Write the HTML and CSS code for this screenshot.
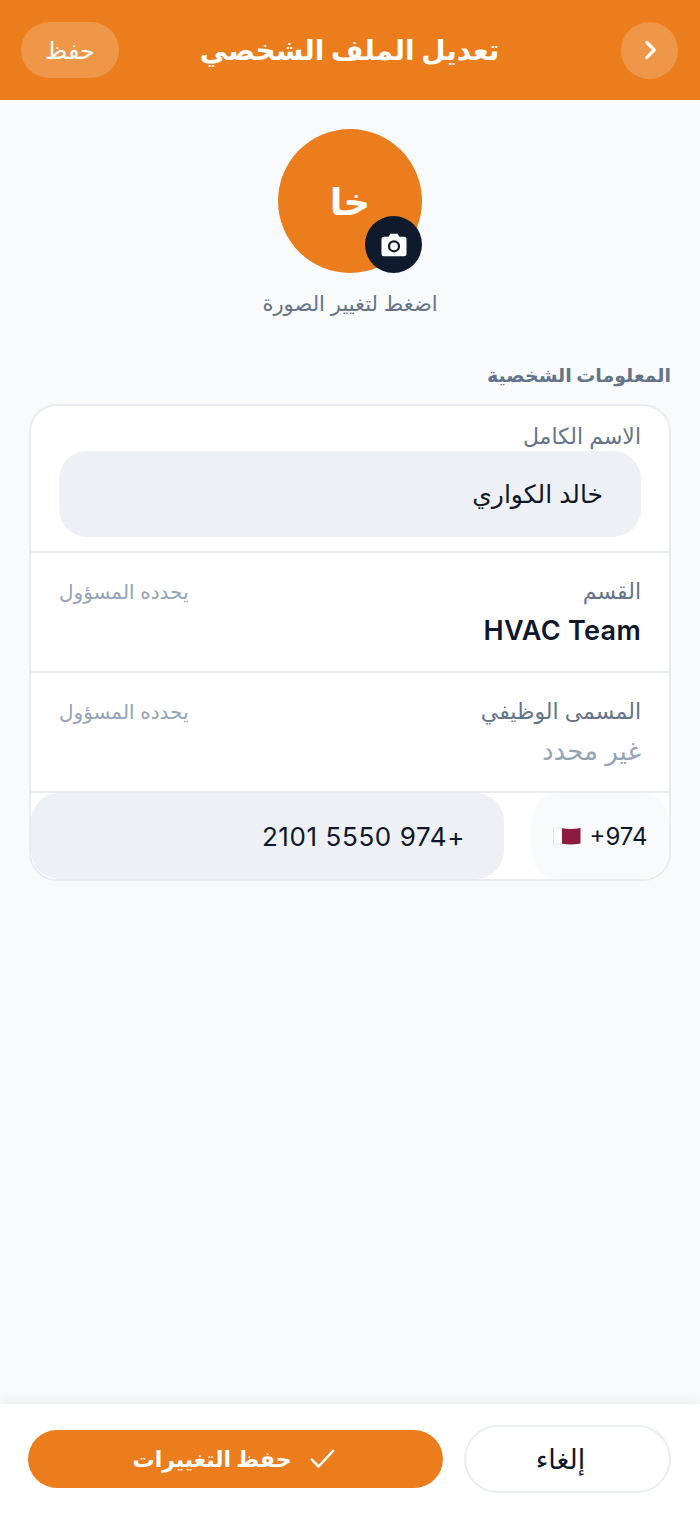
FILE: index.html
```html
<!DOCTYPE html>
<html lang="ar" dir="rtl">
<head>
  <meta charset="UTF-8" />
  <meta name="viewport" content="width=device-width, initial-scale=1.0" />
  <title>تعديل الملف الشخصي</title>
  <link rel="stylesheet" href="styles.css">
</head>
<body>
  <header class="topbar">
    <button class="back-btn" aria-label="رجوع">
      <svg width="26" height="26" viewBox="0 0 24 24" fill="none" stroke="#fff" stroke-width="3" stroke-linecap="round" stroke-linejoin="round"><path d="M9 5l7 7-7 7"/></svg>
    </button>
    <h1>تعديل الملف الشخصي</h1>
    <button class="save-link">حفظ</button>
  </header>

  <main class="content">
    <div class="avatar-group">
      <div class="avatar">
        <span>خا</span>
        <div class="camera">
          <svg width="30" height="30" viewBox="0 0 24 24"><path fill="#fff" d="M9.2 3h5.600l1.600 2.400H20a2 2 0 0 1 2 2V19a2 2 0 0 1-2 2H4a2 2 0 0 1-2-2V7.400a2 2 0 0 1 2-2h3.600z"/><circle cx="12" cy="13" r="4" fill="none" stroke="#0f1b2d" stroke-width="1.800"/></svg>
        </div>
      </div>
      <p class="avatar-hint">اضغط لتغيير الصورة</p>
    </div>

    <h2 class="section-title">المعلومات الشخصية</h2>

    <section class="card">
      <div class="row row-name">
        <label>الاسم الكامل</label>
        <div class="input">خالد الكواري</div>
      </div>
      <div class="row row-locked">
        <div>
          <label>القسم</label>
          <p class="value value-en">HVAC Team</p>
        </div>
        <span class="note">يحدده المسؤول</span>
      </div>
      <div class="row row-locked">
        <div>
          <label>المسمى الوظيفي</label>
          <p class="value value-empty">غير محدد</p>
        </div>
        <span class="note">يحدده المسؤول</span>
      </div>
      <div class="row-phone">
        <div class="code">
          <span>+974</span>
          <svg width="28" height="20" viewBox="0 0 28 20"><path d="M.5 2.500c3-.8 6-.8 9-.3v16c-3-.5-6-.5-9 .3z" fill="#fff" stroke="#e3e5e8"/><path d="M9 2.200c6 1 12 1 18.500-.2v15.500c-6.500 1.200-12.500 1.200-18.500.2z" fill="#8d1b3d"/></svg>
        </div>
        <div class="phone">+974 5550 2101</div>
      </div>
    </section>
  </main>

  <footer class="actions">
    <button class="btn-cancel">إلغاء</button>
    <button class="btn-save">
      <svg width="30" height="30" viewBox="0 0 24 24" fill="none" stroke="#fff" stroke-width="2" stroke-linecap="round" stroke-linejoin="round"><path d="M3 12.500l5.500 5.500L20 5.500"/></svg>
      حفظ التغييرات
    </button>
  </footer>
</body>
</html>
```

FILE: styles.css
```css
* {
  margin: 0;
  padding: 0;
  box-sizing: border-box;
}

body {
  font-family: Inter, 'Noto Sans', 'DejaVu Sans', sans-serif;
  color: #0f172a;
  background-color: #f8fafc;
  min-height: 100vh;
  display: flex;
  flex-direction: column;
}

button {
  font-family: inherit;
  border: none;
  background: none;
}

.topbar {
  height: 100px;
  background: #ec7d1c;
  display: grid;
  grid-template-columns: 1fr auto 1fr;
  align-items: center;
  padding: 0 22px 0 21px;
  color: #fff;
}

.topbar h1 {
  font-size: 28px;
  font-weight: 700;
}

.back-btn {
  width: 57px;
  height: 57px;
  border-radius: 50%;
  background: rgba(255, 255, 255, 0.2);
  display: flex;
  align-items: center;
  justify-content: center;
}

.save-link {
  justify-self: end;
  width: 98px;
  height: 56px;
  border-radius: 28px;
  background: rgba(255, 255, 255, 0.2);
  color: #fff;
  font-size: 24px;
  font-weight: 500;
}

.content {
  flex: 1;
  padding: 29px 29px 0;
}

.avatar-group {
  display: flex;
  flex-direction: column;
  align-items: center;
}

.avatar {
  position: relative;
  width: 144px;
  height: 144px;
  border-radius: 50%;
  background: #ec7d1c;
  color: #fff;
  font-size: 37px;
  font-weight: 700;
  display: flex;
  align-items: center;
  justify-content: center;
}

.camera {
  position: absolute;
  right: 0;
  bottom: 0;
  width: 57px;
  height: 57px;
  border-radius: 50%;
  background: #0f1b2d;
  display: flex;
  align-items: center;
  justify-content: center;
}

.avatar-hint {
  margin-top: 18px;
  font-size: 21px;
  color: #64748b;
}

.section-title {
  margin-top: 48px;
  font-size: 19px;
  font-weight: 700;
  color: #64748b;
}

.card {
  margin-top: 17px;
  background: #fff;
  border: 2px solid #e9edf2;
  border-radius: 28px;
  overflow: hidden;
}

.row {
  padding: 0 28px;
  border-bottom: 2px solid #e9edf2;
}

.row label {
  display: block;
  font-size: 22px;
  color: #64748b;
}

.row-name {
  height: 147px;
  padding-top: 17px;
}

.input {
  height: 86px;
  margin-top: 2px;
  padding: 0 38px;
  border-radius: 28px;
  background: #edf1f6;
  font-size: 25px;
  display: flex;
  align-items: center;
}

.row-locked {
  height: 120px;
  padding-top: 25px;
  display: flex;
  justify-content: space-between;
  align-items: flex-start;
}

.value {
  margin-top: 10px;
}

.value-en {
  font-size: 27px;
  font-weight: 600;
  letter-spacing: 0.3px;
}

.value-empty {
  font-size: 26px;
  margin-top: 11px;
  color: #94a3b8;
}

.note {
  font-size: 20px;
  color: #94a3b8;
  margin-top: 2px;
}

.row-phone {
  height: 86px;
  display: flex;
  justify-content: space-between;
}

.code {
  width: 138px;
  border-radius: 28px;
  background: #f8fafc;
  font-size: 24px;
  display: flex;
  align-items: center;
  justify-content: center;
  gap: 9px;
}

.code span {
  direction: ltr;
}

.phone {
  width: 473px;
  padding: 0 39px;
  border-radius: 28px;
  background: #edf1f6;
  font-size: 26px;
  letter-spacing: 0.6px;
  display: flex;
  align-items: center;
}

.actions {
  height: 111px;
  background: #fff;
  box-shadow: 0 -4px 12px rgba(15, 23, 42, 0.05);
  display: flex;
  align-items: flex-start;
  gap: 21px;
  padding: 21px 29px 0 28px;
}

.btn-cancel {
  width: 207px;
  height: 68px;
  padding-right: 14px;
  border: 2px solid #e9edf2;
  border-radius: 34px;
  background: #fff;
  color: #0f172a;
  font-size: 27px;
  font-weight: 500;
}

.btn-save {
  flex: 1;
  height: 58px;
  margin-top: 5px;
  border-radius: 29px;
  background: #ec7d1c;
  color: #fff;
  font-size: 22px;
  font-weight: 700;
  display: flex;
  align-items: center;
  justify-content: center;
  gap: 17px;
}
```
